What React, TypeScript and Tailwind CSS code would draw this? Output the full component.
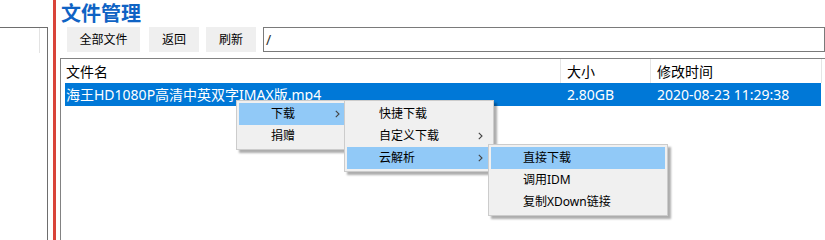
import type { ReactNode } from "react";

type MenuItem = {
  label: string;
  sub?: boolean;
  active?: boolean;
};

function Chevron() {
  return (
    <svg width="5" height="8" viewBox="0 0 5 8" className="shrink-0">
      <path d="M0.8 0.8 L4 4 L0.8 7.2" fill="none" stroke="#444" strokeWidth="1.1" />
    </svg>
  );
}

function ContextMenu({
  items,
  className,
}: {
  items: MenuItem[];
  className: string;
}) {
  return (
    <div
      className={`absolute border border-[#cccccc] bg-[#f0f0f0] p-[2px] text-[12px] text-black shadow-[3px_3px_2px_rgba(0,0,0,0.32)] ${className}`}
    >
      {items.map((item) => (
        <div
          key={item.label}
          className={`flex h-[22px] items-center justify-between pl-[32px] pr-[8px] leading-[22px] ${
            item.active ? "bg-[#91c9f7]" : ""
          }`}
        >
          <span>{item.label}</span>
          {item.sub ? <Chevron /> : null}
        </div>
      ))}
    </div>
  );
}

function ToolButton({ children, width }: { children: ReactNode; width: string }) {
  return (
    <button
      type="button"
      className={`flex h-[25px] shrink-0 items-center justify-center bg-[#efefef] text-[12px] text-black ${width}`}
    >
      {children}
    </button>
  );
}

export default function App() {
  return (
    <div className="relative flex h-[240px] w-[825px] overflow-hidden bg-white font-['Noto_Sans','Noto_Sans_CJK_SC',sans-serif] text-black">
      {/* left tree panel */}
      <div className="w-[48px] shrink-0 pt-[27px]">
        <div className="h-full border-t border-r border-[#6e6e6e]">
          <div className="h-[25px] w-[40px] border-r border-[#e3e3e3]" />
        </div>
      </div>

      {/* splitter */}
      <div className="ml-[5px] w-[3px] shrink-0 bg-[#d9443a]" />

      {/* main */}
      <div className="flex min-w-0 flex-1 flex-col pl-[4px]">
        <div className="flex h-[27px] items-start pl-[1px]">
          <span className="font-['Noto_Sans_CJK_SC',sans-serif] text-[20px] font-bold leading-[26px] text-[#0f63c4]">
            文件管理
          </span>
        </div>

        <div className="flex h-[25px] items-stretch pl-[7px]">
          <ToolButton width="w-[73px]">全部文件</ToolButton>
          <div className="w-[9px] shrink-0" />
          <ToolButton width="w-[50px]">返回</ToolButton>
          <div className="w-[7px] shrink-0" />
          <ToolButton width="w-[50px]">刷新</ToolButton>
          <div className="w-[7px] shrink-0" />
          <div className="flex flex-1 items-center border border-[#7a7a7a] pl-[2px] text-[14px] text-[#333]">
            /
          </div>
        </div>

        <div className="mt-[6px] flex-1 border-t border-l border-[#828282] text-[14px]">
          <div className="flex h-[24px] items-center">
            <div className="flex h-full w-[499px] items-center pl-[5px]">文件名</div>
            <div className="flex h-full w-[90px] items-center border-l border-[#e5e5e5] pl-[6px]">
              大小
            </div>
            <div className="flex h-full w-[171px] items-center border-l border-[#e5e5e5] pl-[6px]">
              修改时间
            </div>
            <div className="h-full border-l border-[#e5e5e5]" />
          </div>

          <div className="ml-[4px] flex h-[23px] w-[756px] items-center bg-[#0078d7] text-white">
            <div className="w-[495px] pl-[1px] whitespace-nowrap">海王HD1080P高清中英双字IMAX版.mp4</div>
            <div className="w-[90px] pl-[7px]">2.80GB</div>
            <div className="w-[171px] pl-[7px] whitespace-nowrap">2020-08-23 11:29:38</div>
          </div>
        </div>
      </div>

      {/* context menus */}
      <ContextMenu
        className="left-[236px] top-[100px] w-[115px]"
        items={[{ label: "下载", sub: true, active: true }, { label: "捐赠" }]}
      />
      <ContextMenu
        className="left-[344px] top-[100px] w-[150px]"
        items={[
          { label: "快捷下载" },
          { label: "自定义下载", sub: true },
          { label: "云解析", sub: true, active: true },
        ]}
      />
      <ContextMenu
        className="left-[488px] top-[144px] w-[180px]"
        items={[
          { label: "直接下载", active: true },
          { label: "调用IDM" },
          { label: "复制XDown链接" },
        ]}
      />
    </div>
  );
}
